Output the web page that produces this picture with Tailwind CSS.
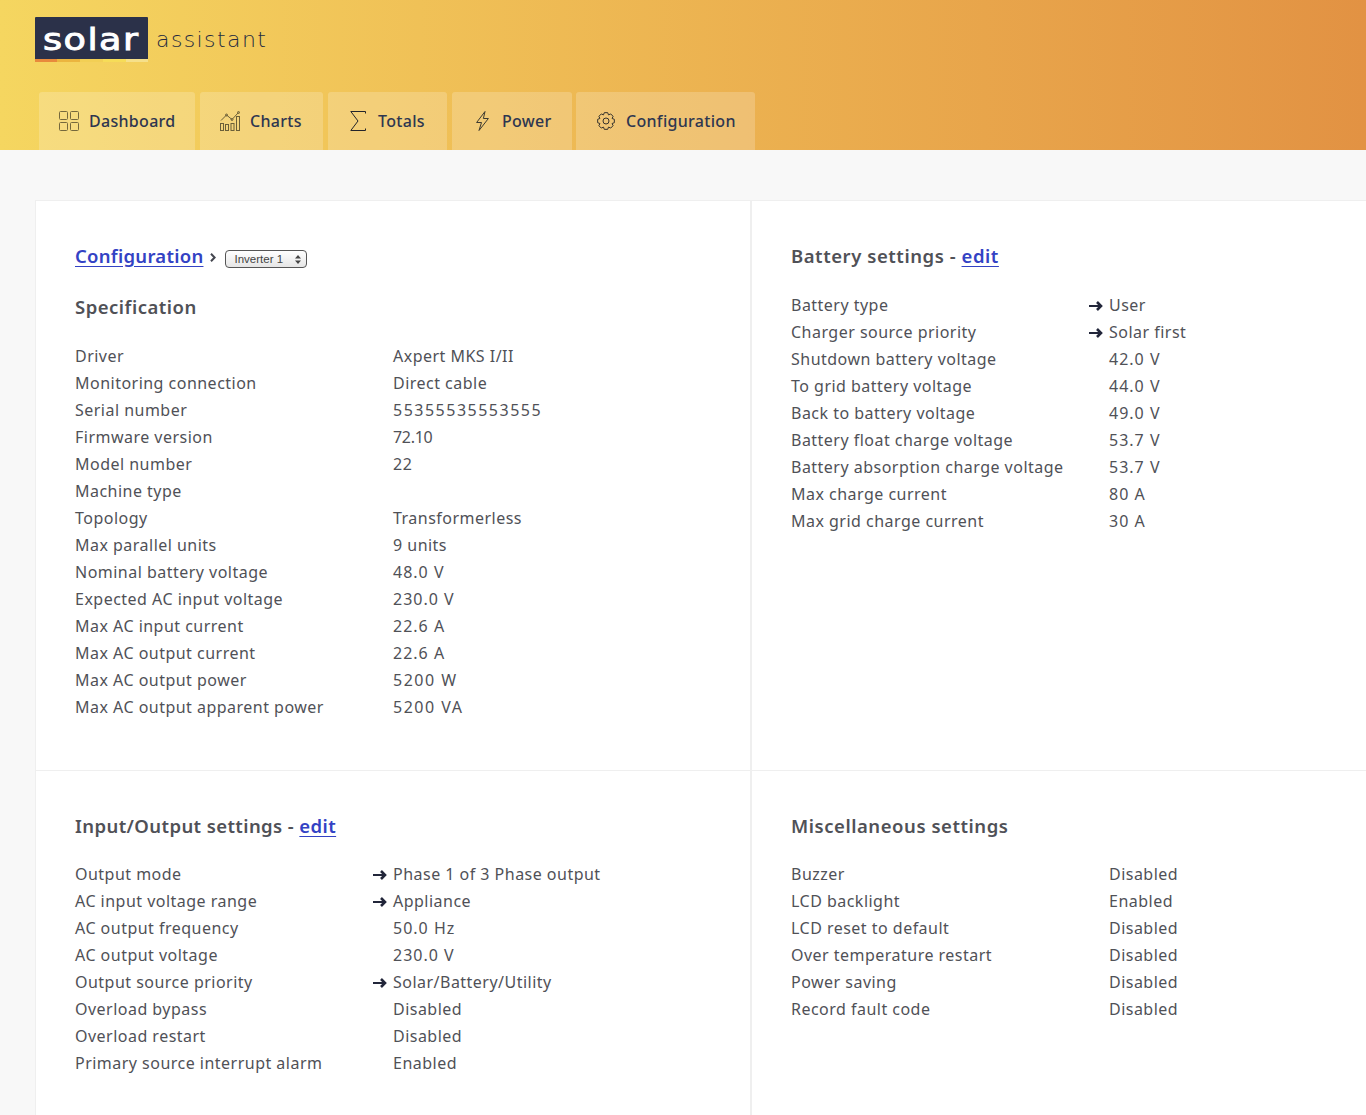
<!DOCTYPE html>
<html lang="en">
<head>
    <meta charset="UTF-8">
    <title>Solar Assistant</title>
    <script src="https://cdn.jsdelivr.net/npm/@tailwindcss/browser@4"></script>
</head>
<body class="bg-[#f8f8f8] overflow-hidden h-[1115px] font-['Noto_Sans',sans-serif] text-[16px] text-[#505157] tracking-[0.48px]">
    <header class="h-[150px] bg-gradient-to-r from-[#f5d660] to-[#e29243] pl-[35px] pt-[17px]">
        <div class="flex h-[75px]">
            <div class="w-[113px]">
                <div class="h-[42px] bg-[#2b3149] rounded-t-[1px] text-white text-[30px] leading-[45px] pl-[8px] tracking-[1.2px] font-['DejaVu_Sans',sans-serif] [-webkit-text-stroke:0.9px_white]"><span class="inline-block origin-left scale-x-[1.22]">solar</span></div>
                <div class="flex h-[3px]">
                    <div class="w-[22px] bg-[#e88a3c]"></div>
                    <div class="w-[23px] bg-[#ebb53f]"></div>
                    <div class="w-[23px] bg-[#f2cf55]"></div>
                    <div class="w-[23px] bg-[#f6dc58]"></div>
                    <div class="w-[22px] bg-[#f6e08a]"></div>
                </div>
            </div>
            <div class="ml-[8px] text-[22px] font-extralight text-[#262b40] leading-[45px] tracking-[1.4px] font-['DejaVu_Sans',sans-serif]">assistant</div>
        </div>
        <nav class="ml-[4px] flex text-[#2e3650] text-[16px] font-medium tracking-[0.3px]">
            <a class="h-[58px] w-[156px] mr-[5px] bg-white/20 rounded-t-[3px] flex items-center pl-[20px]">
                <span class="w-[20px] mr-[10px] flex justify-center">
                    <svg width="20" height="20" viewBox="0 0 20 20" fill="none" stroke="#75683c" stroke-width="1">
                        <rect x="0.5" y="0.5" width="8" height="8" rx="1"/><rect x="11.5" y="0.5" width="8" height="8" rx="1"/>
                        <rect x="0.5" y="11.5" width="8" height="8" rx="1"/><rect x="11.5" y="11.5" width="8" height="8" rx="1"/>
                    </svg>
                </span>Dashboard</a>
            <a class="h-[58px] w-[123px] mr-[5px] bg-white/20 rounded-t-[3px] flex items-center pl-[20px]">
                <span class="w-[20px] mr-[10px] flex justify-center">
                    <svg width="20" height="20" viewBox="0 0 20 20" fill="none" stroke="#6b5f38" stroke-width="1">
                        <rect x="0.5" y="12.5" width="3" height="7"/><rect x="5.5" y="13.5" width="3" height="6"/>
                        <rect x="11" y="12.5" width="3" height="7"/><rect x="16.5" y="5.5" width="3" height="14"/>
                        <path d="M1 9.5 6.5 4 12 8.5 18.5 1.5"/>
                        <circle cx="6.5" cy="4" r="1"/><circle cx="12" cy="8.5" r="1"/><circle cx="18.5" cy="1.5" r="1"/>
                    </svg>
                </span>Charts</a>
            <a class="h-[58px] w-[119px] mr-[5px] bg-white/20 rounded-t-[3px] flex items-center pl-[20px]">
                <span class="w-[20px] mr-[10px] flex justify-center">
                    <svg width="16" height="20" viewBox="0 0 16 20" fill="none" stroke="#23242a" stroke-width="1">
                        <path d="M15.5 2.5V.5H.8L8 10 .8 19.5H15.5V17.5"/>
                    </svg>
                </span>Totals</a>
            <a class="h-[58px] w-[120px] mr-[4px] bg-white/20 rounded-t-[3px] flex items-center pl-[20px]">
                <span class="w-[20px] mr-[10px] flex justify-center">
                    <svg width="13" height="20" viewBox="0 0 13 20" fill="none" stroke="#3d3a30" stroke-width="1" stroke-linejoin="round">
                        <path d="M9 .5 .6 11.5H5.5L3 19.5 12.4 7.5H7.4Z"/>
                    </svg>
                </span>Power</a>
            <a class="h-[58px] w-[179px] bg-white/20 rounded-t-[3px] flex items-center pl-[20px]">
                <span class="w-[20px] mr-[10px] flex justify-center">
                    <svg width="18" height="18" viewBox="0 0 18 18" fill="none" stroke="#35322c" stroke-width="1" stroke-linejoin="round">
                        <path id="gear" d=""/>
                        <circle cx="9" cy="9" r="3"/>
                    </svg>
                </span>Configuration</a>
        </nav>
    </header>
    <main class="pl-[35px] pt-[50px] grid grid-cols-[716px_1fr] grid-rows-[570px_345px]">
        <section class="bg-white border border-[#efefef] border-b-0 pl-[39px] pt-[39px]">
            <div class="h-[32px] flex items-center">
                <a class="text-[18.5px] font-semibold tracking-[0.27px] text-[#3342c4] underline underline-offset-[3px]">Configuration</a>
                <svg class="ml-[7px] mt-[2px]" width="6" height="9" viewBox="0 0 6 9" fill="none" stroke="#44464f" stroke-width="2"><path d="M1 .8 4.6 4.5 1 8.2"/></svg>
                <span class="ml-[9px] mt-[6px] relative">
                    <select class="appearance-none block w-[82px] h-[18px] pl-[8px] text-[11.5px] tracking-normal leading-[16px] text-[#444] font-['Liberation_Sans',sans-serif] border border-[#555] rounded-[4px] bg-gradient-to-b from-white to-[#e6e6e6]">
                        <option>Inverter 1</option>
                    </select>
                    <svg class="absolute right-[6px] top-[5px]" width="6" height="9" viewBox="0 0 6 9" fill="#444"><path d="M3 0 6 3.5H0ZM3 9 0 5.5H6Z"/></svg>
                </span>
            </div>
            <h2 class="mt-[19px] h-[32px] leading-[32px] text-[18.5px] font-semibold tracking-[0.5px]">Specification</h2>
            <div id="spec" class="mt-[20px]"></div>
        </section>
        <section class="bg-white border-l border-t border-[#efefef] pl-[39px] pt-[39px]">
            <h2 class="h-[32px] leading-[32px] text-[18.5px] font-semibold tracking-[0.55px]">Battery settings - <a class="text-[#3342c4] underline underline-offset-[3px]">edit</a></h2>
            <div id="battery" class="mt-[20px]"></div>
        </section>
        <section class="bg-white border-x border-t border-[#efefef] pl-[39px] pt-[39px]">
            <h2 class="h-[32px] leading-[32px] text-[18.5px] font-semibold tracking-[0.4px]">Input/Output settings - <a class="text-[#3342c4] underline underline-offset-[3px]">edit</a></h2>
            <div id="io" class="mt-[19px]"></div>
        </section>
        <section class="bg-white border-l border-t border-[#efefef] pl-[39px] pt-[39px]">
            <h2 class="h-[32px] leading-[32px] text-[18.5px] font-semibold tracking-[0.55px]">Miscellaneous settings</h2>
            <div id="misc" class="mt-[19px]"></div>
        </section>
    </main>

    <script>
        // [label, value, has arrow]
        const sections = {
            spec: [
                ['Driver', 'Axpert MKS I/II'],
                ['Monitoring connection', 'Direct cable'],
                ['Serial number', '55355535553555'],
                ['Firmware version', '72.10'],
                ['Model number', '22'],
                ['Machine type', ''],
                ['Topology', 'Transformerless'],
                ['Max parallel units', '9 units'],
                ['Nominal battery voltage', '48.0 V'],
                ['Expected AC input voltage', '230.0 V'],
                ['Max AC input current', '22.6 A'],
                ['Max AC output current', '22.6 A'],
                ['Max AC output power', '5200 W'],
                ['Max AC output apparent power', '5200 VA'],
            ],
            battery: [
                ['Battery type', 'User', true],
                ['Charger source priority', 'Solar first', true],
                ['Shutdown battery voltage', '42.0 V'],
                ['To grid battery voltage', '44.0 V'],
                ['Back to battery voltage', '49.0 V'],
                ['Battery float charge voltage', '53.7 V'],
                ['Battery absorption charge voltage', '53.7 V'],
                ['Max charge current', '80 A'],
                ['Max grid charge current', '30 A'],
            ],
            io: [
                ['Output mode', 'Phase 1 of 3 Phase output', true],
                ['AC input voltage range', 'Appliance', true],
                ['AC output frequency', '50.0 Hz'],
                ['AC output voltage', '230.0 V'],
                ['Output source priority', 'Solar/Battery/Utility', true],
                ['Overload bypass', 'Disabled'],
                ['Overload restart', 'Disabled'],
                ['Primary source interrupt alarm', 'Enabled'],
            ],
            misc: [
                ['Buzzer', 'Disabled'],
                ['LCD backlight', 'Enabled'],
                ['LCD reset to default', 'Disabled'],
                ['Over temperature restart', 'Disabled'],
                ['Power saving', 'Disabled'],
                ['Record fault code', 'Disabled'],
            ],
        };

        const arrow = `<svg width="14" height="10" viewBox="0 0 14 10" fill="none" stroke="#22263a"><path stroke-width="2" d="M0 5H11"/><path stroke-width="2.6" d="M8 1l4 4-4 4"/></svg>`;

        // the reference font has wider digits than Noto Sans
        function valueClass(value) {
            if (/^\d{6,}$/.test(value)) return 'tracking-[1.5px]';
            if (/^5200/.test(value)) return 'tracking-[1.5px]';
            if (/^[\d.]+ [A-Z]/.test(value)) return 'tracking-[1px]';
            if (value === '72.10') return 'tracking-[-0.3px]';
            return '';
        }

        for (const id in sections) {
            document.getElementById(id).innerHTML = sections[id].map(([label, value, changed]) => `
                <div class="flex h-[27px] leading-[27px]">
                    <div class="w-[298px]">${label}</div>
                    <div class="w-[20px] flex items-center">${changed ? arrow : ''}</div>
                    <div class="${valueClass(value)}">${value}</div>
                </div>
            `).join('');
        }

        // 8 tooth gear outline
        let gear = '';
        for (let i = 0; i < 8; i++) {
            const a = i * Math.PI / 4;
            [[6.6, -0.39], [8.5, -0.2], [8.5, 0.2], [6.6, 0.39]].forEach(([r, d]) => {
                const x = 9 + r * Math.cos(a + d);
                const y = 9 + r * Math.sin(a + d);
                gear += (gear ? 'L' : 'M') + x.toFixed(2) + ' ' + y.toFixed(2);
            });
        }
        document.getElementById('gear').setAttribute('d', gear + 'Z');
    </script>
</body>
</html>
